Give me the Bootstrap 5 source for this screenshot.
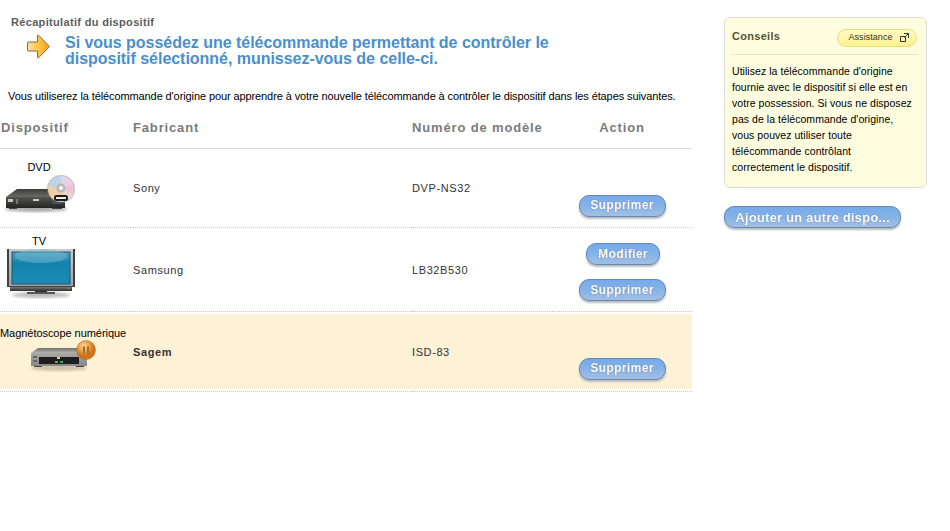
<!DOCTYPE html>
<html lang="fr">
<head>
    <meta charset="UTF-8">
    <title>Récapitulatif du dispositif</title>
    <link href="https://cdn.jsdelivr.net/npm/bootstrap@5.3.0/dist/css/bootstrap.min.css" rel="stylesheet">
    <style>
        body { font-family: "Liberation Sans", Arial, sans-serif; font-size: 11px; color: #000; background: #fff; }
        .page-wrap { width: 950px; height: 531px; overflow: hidden; }
        .main-col { width: 692px; }
        .side-col { width: 203px; margin-left: 32px; padding-top: 17px; }
        .recap-title { font-size: 11px; font-weight: bold; color: #5c5c5c; letter-spacing: .33px; margin: 15px 0 0 11px; line-height: 14px; }
        .intro-line { margin: 0 0 0 27px; gap: 15px; }
        .intro-arrow { margin-top: 5px; }
        .intro-text { font-size: 16px; font-weight: bold; color: #4a8fcb; letter-spacing: -.03px; line-height: 16px; margin: 0; padding-top: 6px; }
        .note-line { margin: 22px 0 0 8px; line-height: 14px; letter-spacing: -.1px; }
        .dev-table { width: 692px; table-layout: fixed; border-collapse: collapse; margin: 3px 0 0; }
        .dev-table th { font-size: 13px; font-weight: bold; color: #7b7b7b; letter-spacing: .85px; height: 42px; border-bottom: 1px solid #cfd8e4; padding: 1px 0 0 0; }
        .dev-table th.head-first { padding-left: 1px; }
        .dev-table td { padding: 0; border-bottom: 1px dotted #ccc; vertical-align: middle; font-size: 11px; color: #333; letter-spacing: .6px; }
        .dev-table td.cell-txt { padding-top: 2px; }
        .dev-table td.cell-bottom { vertical-align: bottom; padding-bottom: 10px; }
        .dev-table tr.row-three td.cell-bottom { padding-bottom: 11px; }
        .dev-table td.cell-stack { padding-top: 6px; }
        .dev-table tr.row-one td { height: 79px; }
        .dev-table tr.row-two td { height: 84px; }
        .dev-table tr.row-three td { height: 80px; background: #fdf1d6; box-shadow: inset 0 2px 0 #fff, inset 0 -2px 0 #fff; }
        .dev-name { letter-spacing: -.05px; color: #000; font-size: 11px; line-height: 12px; width: 78px; white-space: nowrap; }
        .dev-name-wide { width: 125px; }
        .brand-bold { font-weight: bold; }
        .pill-btn { display: block; margin: 0 auto; border: 1px solid #6288b4; border-radius: 10px; height: 22px; padding: 0; background: linear-gradient(#75aaea, #86b2e8 50%, #a3bfe3); color: #fff; font-size: 12px; font-weight: bold; letter-spacing: .4px; line-height: 19px; box-shadow: 0 2px 2px #bbb; text-shadow: 0 0 1px #3d5f88; }
        .btn-sup { width: 87px; }
        .btn-mod { width: 74px; margin-left: 34px; }
        .btn-add { width: 177px; font-size: 13px; letter-spacing: .2px; }
        .action-stack { gap: 14px; }
        .tip-box { height: 171px; background: #fffde0; border: 1px solid #ddd; border-radius: 6px; padding: 9px 9px 0 7px; }
        .tip-head { height: 28px; border-bottom: 1px dotted #cfcfa8; padding-bottom: 6px; }
        .tip-title { font-size: 11px; font-weight: bold; color: #555530; letter-spacing: .3px; padding-bottom: 2px; }
        .help-pill { width: 80px; height: 18px; border: 1px solid #ebdd7a; border-radius: 9px; background: linear-gradient(#fffbc4, #fdf28e); font-size: 9px; letter-spacing: .05px; color: #333; gap: 7px; padding-left: 3px; }
        .tip-copy { margin: 8px 0 0; line-height: 16px; font-size: 10.5px; letter-spacing: .05px; color: #000; }
        .add-wrap { margin-top: 18px; }
    </style>
</head>
<body>
<div class="page-wrap d-flex">
    <!-- Left part -->
    <div class="main-col">
        <div class="recap-title">Récapitulatif du dispositif</div>
        <div class="intro-line d-flex align-items-start">
            <svg width="23" height="25" viewBox="0 0 23 25" class="intro-arrow flex-shrink-0">
                <defs><linearGradient id="arrowFill" x1="0" y1="0" x2="1" y2="0"><stop offset="0" stop-color="#f9dfae"/><stop offset=".45" stop-color="#ffc94a"/><stop offset="1" stop-color="#f79f1e"/></linearGradient></defs>
                <path d="M1.500 8h9V1.500q0-1 1-.3L21.800 11.700q1 .8 0 1.600L11.500 23.800q-1 .7-1-.3V17h-9q-1 0-1-1V9q0-1 1-1z" fill="url(#arrowFill)" stroke="#8f6a3c"/>
            </svg>
            <p class="intro-text">Si vous possédez une télécommande permettant de contrôler le<br>dispositif sélectionné, munissez-vous de celle-ci.</p>
        </div>
        <p class="note-line">Vous utiliserez la télécommande d'origine pour apprendre à votre nouvelle télécommande à contrôler le dispositif dans les étapes suivantes.</p>

        <table class="dev-table">
            <colgroup><col style="width:133px"><col style="width:279px"><col style="width:140px"><col style="width:140px"></colgroup>
            <thead>
                <tr><th class="head-first">Dispositif</th><th>Fabricant</th><th>Numéro de modèle</th><th class="text-center">Action</th></tr>
            </thead>
            <tbody>
                <tr class="row-one">
                    <td>
                        <div class="dev-name text-center">DVD</div>
                        <svg width="78" height="42" viewBox="0 -1 78 42" class="d-block">
                            <defs>
                                <linearGradient id="dvdTop" x1="0" y1="0" x2="0" y2="1"><stop offset="0" stop-color="#3c3c3a"/><stop offset="1" stop-color="#6a6a66"/></linearGradient>
                                <linearGradient id="dvdFront" x1="0" y1="0" x2="0" y2="1"><stop offset="0" stop-color="#55554f"/><stop offset="1" stop-color="#232323"/></linearGradient>
                                <filter id="softBlur"><feGaussianBlur stdDeviation="1.500"/></filter>
                                <filter id="discBlur"><feGaussianBlur stdDeviation="1.200"/></filter>
                                <clipPath id="discClip"><circle cx="61" cy="15" r="13"/></clipPath>
                            </defs>
                            <ellipse cx="36" cy="35" rx="31" ry="3" fill="#aaa" filter="url(#softBlur)"/>
                            <path d="M6 23 17 15h48v8z" fill="url(#dvdTop)"/>
                            <rect x="6" y="23" width="59" height="11" fill="url(#dvdFront)"/>
                            <rect x="8" y="25" width="5" height="3" fill="#c4c4c4"/>
                            <rect x="16" y="25" width="2" height="5" fill="#777"/>
                            <rect x="33" y="25" width="6" height="2" fill="#ccc"/>
                            <rect x="9" y="34" width="8" height="1" fill="#444"/>
                            <rect x="52" y="34" width="10" height="1" fill="#444"/>
                            <circle cx="61" cy="15" r="14" fill="#888" opacity=".5"/>
                            <g clip-path="url(#discClip)">
                                <g filter="url(#discBlur)">
                                    <rect x="46" y="0" width="30" height="30" fill="#ead6d0"/>
                                    <path d="M61 15V0H46v11z" fill="#b9d6ea"/>
                                    <path d="M61 15V0H76v8z" fill="#e6d2e8"/>
                                    <path d="M61 15 76 8v12z" fill="#f0bfd8"/>
                                    <path d="M61 15 46 11v19h15z" fill="#efcfa6"/>
                                </g>
                            </g>
                            <circle cx="61" cy="14" r="4.500" fill="#b8b8b8"/>
                            <circle cx="61" cy="14" r="2" fill="#fff"/>
                            <rect x="54" y="21" width="14" height="6" rx="2.500" fill="#1c1c1c"/>
                            <rect x="56" y="23" width="10" height="2" fill="#eee"/>
                            <rect x="52" y="28" width="11" height="2" fill="#36566e"/>
                        </svg>
                    </td>
                    <td class="cell-txt">Sony</td>
                    <td class="cell-txt">DVP-NS32</td>
                    <td class="cell-bottom"><button class="pill-btn btn-sup">Supprimer</button></td>
                </tr>
                <tr class="row-two">
                    <td>
                        <div class="dev-name text-center">TV</div>
                        <svg width="78" height="56" viewBox="0 -1 78 56" class="d-block">
                            <defs>
                                <linearGradient id="tvScreen" x1="0" y1="0" x2="0" y2="1"><stop offset="0" stop-color="#4ea3c2"/><stop offset=".35" stop-color="#1283ae"/><stop offset="1" stop-color="#1c8cb6"/></linearGradient>
                                <linearGradient id="tvFrame" x1="0" y1="0" x2="0" y2="1"><stop offset="0" stop-color="#c9cbcd"/><stop offset="1" stop-color="#9ea2a5"/></linearGradient>
                                <linearGradient id="tvBase" x1="0" y1="0" x2="0" y2="1"><stop offset="0" stop-color="#777"/><stop offset="1" stop-color="#2f2f2f"/></linearGradient>
                            </defs>
                            <ellipse cx="41" cy="47" rx="29" ry="3" fill="#bbb" filter="url(#softBlur)"/>
                            <rect x="7" y="1" width="68" height="38" fill="#3f4143"/>
                            <rect x="9" y="1" width="64" height="37" fill="url(#tvFrame)"/>
                            <rect x="12" y="4" width="58" height="32" fill="url(#tvScreen)" stroke="#20536b"/>
                            <ellipse cx="41" cy="8" rx="26" ry="7" fill="#7dbcd3" opacity=".45"/>
                            <rect x="10" y="39" width="62" height="4" fill="url(#tvBase)"/>
                            <rect x="68" y="40" width="1" height="1" fill="#6c6"/>
                            <rect x="35" y="43" width="12" height="1" fill="#333"/>
                            <rect x="27" y="44" width="28" height="2" fill="#555"/>
                        </svg>
                    </td>
                    <td class="cell-txt">Samsung</td>
                    <td class="cell-txt">LB32B530</td>
                    <td class="cell-stack">
                        <div class="action-stack d-flex flex-column">
                            <button class="pill-btn btn-mod">Modifier</button>
                            <button class="pill-btn btn-sup">Supprimer</button>
                        </div>
                    </td>
                </tr>
                <tr class="row-three">
                    <td>
                        <div class="dev-name dev-name-wide text-center">Magnétoscope numérique</div>
                        <svg width="100" height="36" viewBox="0 0 100 36" class="d-block">
                            <defs>
                                <linearGradient id="dvrFront" x1="0" y1="0" x2="0" y2="1"><stop offset="0" stop-color="#a9a9a5"/><stop offset="1" stop-color="#86868a"/></linearGradient>
                                <linearGradient id="dvrTop" x1="0" y1="0" x2="0" y2="1"><stop offset="0" stop-color="#6e6e6c"/><stop offset="1" stop-color="#b5b5b0"/></linearGradient>
                                <radialGradient id="pauseFill" cx=".4" cy=".3"><stop offset="0" stop-color="#fbdcaa"/><stop offset=".6" stop-color="#ee9c3c"/><stop offset="1" stop-color="#cf7416"/></radialGradient>
                            </defs>
                            <ellipse cx="59" cy="29" rx="28" ry="3" fill="#cdbf9f" filter="url(#softBlur)"/>
                            <path d="M31 14 38 9h45l4 5z" fill="url(#dvrTop)"/>
                            <rect x="31" y="14" width="56" height="13" fill="url(#dvrFront)"/>
                            <rect x="33" y="17" width="4" height="2" fill="#666"/>
                            <rect x="33" y="21" width="4" height="2" fill="#666"/>
                            <rect x="39" y="18" width="40" height="7" fill="#1d1d1d"/>
                            <rect x="57" y="18" width="3" height="2" fill="#dbdb55"/>
                            <rect x="55" y="22" width="3" height="2" fill="#a68a4c"/>
                            <rect x="60" y="22" width="3" height="2" fill="#35b04b"/>
                            <rect x="34" y="27" width="8" height="1" fill="#444"/>
                            <rect x="76" y="27" width="8" height="1" fill="#444"/>
                            <circle cx="86" cy="11" r="9.500" fill="url(#pauseFill)" stroke="#a9642a" stroke-width=".5"/>
                            <rect x="83" y="7" width="2" height="8" rx="1" fill="#a56f34"/>
                            <rect x="87" y="7" width="2" height="8" rx="1" fill="#a56f34"/>
                        </svg>
                    </td>
                    <td class="cell-txt brand-bold">Sagem</td>
                    <td class="cell-txt">ISD-83</td>
                    <td class="cell-bottom"><button class="pill-btn btn-sup">Supprimer</button></td>
                </tr>
            </tbody>
        </table>
    </div>

    <!-- Right part -->
    <div class="side-col">
        <div class="tip-box">
            <div class="tip-head d-flex justify-content-between align-items-center">
                <span class="tip-title">Conseils</span>
                <span class="help-pill d-flex align-items-center justify-content-center">Assistance
                    <svg width="9" height="9" viewBox="0 0 9 9"><path d="M.5 3.500h5v5h-5zM4 .5h4.500V5M8.500 .5 4.500 4.500" fill="none" stroke="#333"/></svg>
                </span>
            </div>
            <p class="tip-copy">Utilisez la télécommande d'origine fournie avec le dispositif si elle est en votre possession. Si vous ne disposez pas de la télécommande d'origine, vous pouvez utiliser toute télécommande contrôlant<br>correctement le dispositif.</p>
        </div>
        <div class="add-wrap">
            <button class="pill-btn btn-add ms-0">Ajouter un autre dispo...</button>
        </div>
    </div>
</div>
<script src="https://cdn.jsdelivr.net/npm/bootstrap@5.3.0/dist/js/bootstrap.bundle.min.js"></script>
</body>
</html>
